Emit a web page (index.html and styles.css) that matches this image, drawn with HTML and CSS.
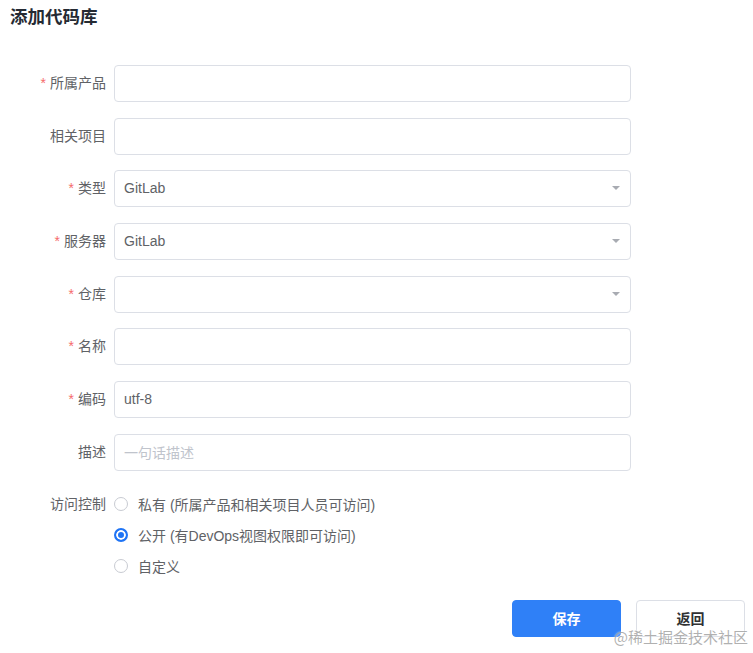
FILE: index.html
```html
<!DOCTYPE html>
<html lang="zh-CN">
<head>
<meta charset="utf-8">
<title>添加代码库</title>
<link rel="stylesheet" href="styles.css">
</head>
<body>
<div class="page">
  <h2 class="title">添加代码库</h2>
  <form class="form">
    <div class="row">
      <label class="label req">所属产品</label>
      <div class="field"><div class="input"></div></div>
    </div>
    <div class="row">
      <label class="label">相关项目</label>
      <div class="field"><div class="input"></div></div>
    </div>
    <div class="row">
      <label class="label req">类型</label>
      <div class="field"><div class="input select"><span class="val">GitLab</span><span class="arrow"></span></div></div>
    </div>
    <div class="row">
      <label class="label req">服务器</label>
      <div class="field"><div class="input select"><span class="val">GitLab</span><span class="arrow"></span></div></div>
    </div>
    <div class="row">
      <label class="label req">仓库</label>
      <div class="field"><div class="input select"><span class="val"></span><span class="arrow"></span></div></div>
    </div>
    <div class="row">
      <label class="label req">名称</label>
      <div class="field"><div class="input"></div></div>
    </div>
    <div class="row">
      <label class="label req">编码</label>
      <div class="field"><div class="input"><span class="val">utf-8</span></div></div>
    </div>
    <div class="row">
      <label class="label">描述</label>
      <div class="field"><div class="input"><span class="placeholder">一句话描述</span></div></div>
    </div>
    <div class="row radios-row">
      <label class="label">访问控制</label>
      <div class="radios">
        <div class="radio"><span class="dot"></span><span class="rtext">私有 (所属产品和相关项目人员可访问)</span></div>
        <div class="radio checked"><span class="dot"></span><span class="rtext">公开 (有DevOps视图权限即可访问)</span></div>
        <div class="radio"><span class="dot"></span><span class="rtext">自定义</span></div>
      </div>
    </div>
    <div class="actions">
      <button type="button" class="btn primary">保存</button>
      <button type="button" class="btn">返回</button>
    </div>
  </form>
</div>
<div class="watermark">@稀土掘金技术社区</div>
</body>
</html>
```

FILE: styles.css
```css
* { box-sizing: border-box; }
html, body { margin: 0; padding: 0; background: #fff; }
body {
  width: 753px;
  height: 653px;
  overflow: hidden;
  font-family: "Liberation Sans", Arial, "Noto Sans CJK SC", sans-serif;
  font-size: 14px;
  color: #606266;
  position: relative;
}
.page { padding: 0 0 0 10px; }
.title {
  margin: 0;
  height: 34px;
  line-height: 34px;
  font-size: 17.5px;
  font-weight: 700;
  color: #252a33;
}
.form { margin: 31px 0 0 -10px; }
.row {
  display: flex;
  align-items: center;
  margin-bottom: 15.7px;
}
.label {
  width: 114px;
  padding-right: 8px;
  padding-bottom: 3px;
  text-align: right;
  font-size: 14px;
  color: #606266;
  flex: none;
}
.label.req::before {
  content: "*";
  color: #f56c6c;
  margin-right: 4px;
}
.field { width: 517px; }
.input {
  height: 37px;
  border: 1px solid #dcdfe6;
  border-radius: 4px;
  display: flex;
  align-items: center;
  padding: 0 10px 1px 9px;
  background: #fff;
}
.val { color: #606266; flex: 1; }
.placeholder { color: #c0c4cc; }
.arrow {
  width: 0;
  height: 0;
  border-left: 4px solid transparent;
  border-right: 4px solid transparent;
  border-top: 4px solid #a8abb2;
}
.radios-row {
  align-items: flex-start;
  margin-top: 23px;
}
.radios-row .label { line-height: 20px; padding-bottom: 0; }
.radios { display: flex; flex-direction: column; gap: 11px; }
.radio {
  display: flex;
  align-items: center;
  height: 20px;
}
.dot {
  width: 14px;
  height: 14px;
  border: 1px solid #c8cbd2;
  border-radius: 50%;
  margin: 0 10px 0 0;
  background: #fff;
  flex: none;
}
.radio.checked .dot {
  border: 2px solid #1f74f5;
  background: #1f74f5;
  box-shadow: inset 0 0 0 2px #fff;
}
.rtext { color: #606266; }
.actions {
  display: flex;
  justify-content: flex-end;
  gap: 15px;
  margin-top: 24px;
  padding-right: 8px;
}
.btn {
  width: 109px;
  height: 37px;
  border: 1px solid #dcdfe6;
  border-radius: 4px;
  background: #fff;
  font-family: "Liberation Sans", Arial, "Noto Sans CJK SC", sans-serif;
  font-size: 14px;
  font-weight: 700;
  color: #303133;
  padding: 0;
}
.btn.primary {
  background: #2f80f7;
  border-color: #2f80f7;
  color: #fff;
}
.watermark {
  position: absolute;
  right: 5px;
  bottom: 6px;
  font-size: 15px;
  color: rgba(150, 150, 150, 0.75);
  font-family: "Noto Sans CJK SC", sans-serif;
  text-shadow: 0 0 2px #fff;
  pointer-events: none;
}
```
